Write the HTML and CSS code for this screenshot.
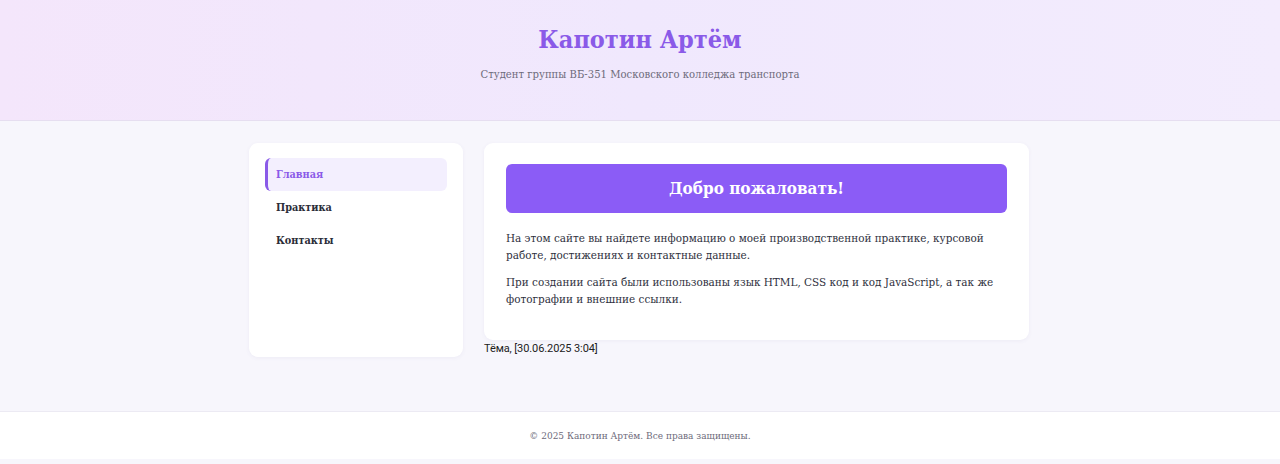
FILE: index.html
```html
<!DOCTYPE html>
<html lang="ru">
<head>
<meta charset="utf-8">
<title>Капотин Артём</title>
<link rel="stylesheet" href="styles.css">
</head>
<body>
<header class="site-header">
  <h1 class="site-title">Капотин Артём</h1>
  <p class="site-subtitle">Студент группы ВБ-351 Московского колледжа транспорта</p>
</header>
<div class="page">
  <div class="layout">
    <nav class="sidebar">
      <a class="nav-item active" href="#">Главная</a>
      <a class="nav-item" href="#">Практика</a>
      <a class="nav-item" href="#">Контакты</a>
    </nav>
    <div class="main-col">
      <section class="card">
        <h2 class="banner">Добро пожаловать!</h2>
        <p class="text">На этом сайте вы найдете информацию о моей производственной практике, курсовой работе, достижениях и контактные данные.</p>
        <p class="text">При создании сайта были использованы язык HTML, CSS код и код JavaScript, а так же фотографии и внешние ссылки.</p>
      </section>
      <div class="note">Тёма, [30.06.2025 3:04]</div>
    </div>
  </div>
</div>
<footer class="site-footer">© 2025 Капотин Артём. Все права защищены.</footer>
</body>
</html>
```

FILE: styles.css
```css
* { box-sizing: border-box; }
html, body { margin: 0; padding: 0; }
body {
  background: #f7f6fc;
  font-family: "DejaVu Serif", serif;
  font-stretch: condensed;
  color: #2d2f3a;
}
.site-header {
  height: 121px;
  background: linear-gradient(90deg, #f4e6fb 0%, #f0e8fd 50%, #f3ecfd 100%);
  border-bottom: 1px solid #e6def0;
  text-align: center;
  padding-top: 24px;
}
.site-title {
  margin: 0;
  font-size: 25px;
  font-weight: bold;
  color: #8a5ae8;
  line-height: 32px;
}
.site-subtitle {
  margin: 12px 0 0;
  font-size: 11.2px;
  color: #6e6b7b;
}
.page {
  height: 290px;
  padding-top: 22px;
}
.layout {
  width: 782px;
  padding-right: 2px;
  margin: 0 auto;
  display: flex;
  align-items: flex-start;
  gap: 21px;
}
.sidebar {
  width: 214px;
  height: 214px;
  flex: none;
  background: #fff;
  border-radius: 9px;
  box-shadow: 0 1px 4px rgba(80, 60, 140, 0.06);
  padding: 15px 16px;
  display: flex;
  flex-direction: column;
}
.nav-item {
  display: block;
  height: 33px;
  line-height: 34px;
  padding-left: 11px;
  font-size: 10.8px;
  font-weight: bold;
  color: #2b2d38;
  text-decoration: none;
  border-radius: 6px;
}
.nav-item.active {
  background: #f3effe;
  color: #8a5ae8;
  border-left: 3px solid #8a5ae8;
  padding-left: 8px;
}
.main-col {
  width: 545px;
  flex: none;
}
.card {
  background: #fff;
  border-radius: 9px;
  box-shadow: 0 1px 4px rgba(80, 60, 140, 0.06);
  padding: 21px 22px 23px;
  height: 197px;
}
.banner {
  margin: 0;
  height: 49px;
  line-height: 49px;
  background: #8b5cf6;
  color: #fff;
  text-align: center;
  font-size: 17px;
  font-weight: bold;
  border-radius: 6px;
}
.text {
  margin: 17px 0 0;
  font-size: 11.6px;
  line-height: 17px;
  color: #2f3140;
}
.text + .text { margin-top: 10px; }
.note {
  margin-top: 2px;
  font-family: Roboto, "Liberation Sans", sans-serif;
  font-stretch: normal;
  font-size: 11px;
  letter-spacing: -0.1px;
  color: #222;
}
.site-footer {
  height: 48px;
  background: #fff;
  border-top: 1px solid #eceaf3;
  text-align: center;
  line-height: 47px;
  font-size: 10px;
  color: #6e6b7b;
}
```
